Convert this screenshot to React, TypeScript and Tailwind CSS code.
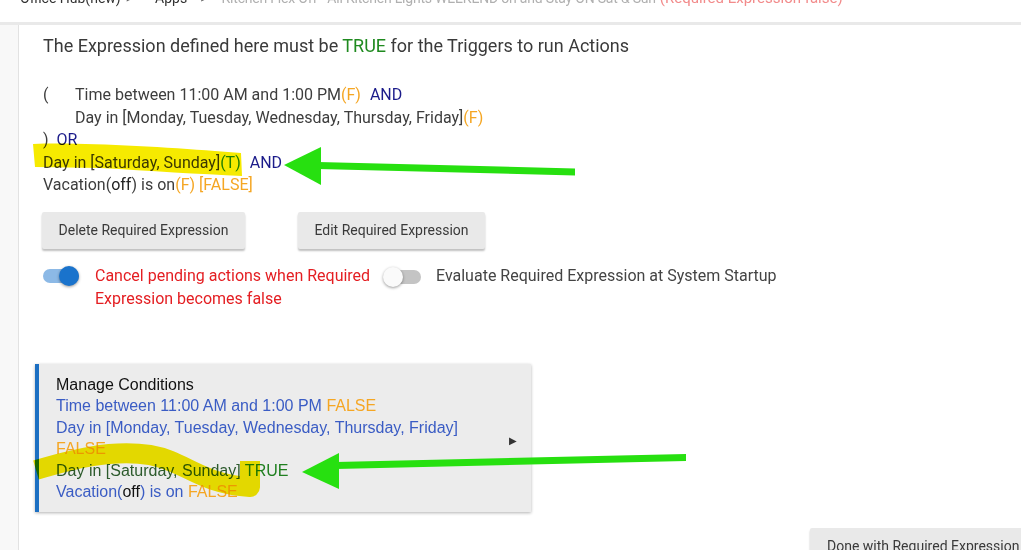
import React from "react";

const roboto = { fontFamily: "Roboto, 'Liberation Sans', sans-serif" } as const;
const arial = { fontFamily: "'Liberation Sans', Arial, sans-serif" } as const;

function Toggle({ on }: { on: boolean }) {
  return (
    <div className="relative h-[20px] w-[38px]">
      <div
        className={
          on
            ? "absolute left-0 top-[3px] h-[14px] w-[36px] rounded-full bg-[#8cb9e6]"
            : "absolute left-[4px] top-[3px] h-[14px] w-[34px] rounded-full bg-[#c4c4c4]"
        }
      />
      <div
        className={
          on
            ? "absolute left-[16px] top-0 h-[20px] w-[20px] rounded-full bg-[#1a73cc] shadow-[0_1px_3px_rgba(0,0,0,0.4)]"
            : "absolute left-0 top-0 h-[20px] w-[20px] rounded-full bg-[#fafafa] shadow-[0_1px_3px_rgba(0,0,0,0.4)]"
        }
      />
    </div>
  );
}

export default function App() {
  return (
    <div className="relative h-[550px] w-[1021px] overflow-hidden bg-white" style={roboto}>
      {/* breadcrumb (cut off at top) */}
      <div className="h-[22px] overflow-hidden">
        <div className="-mt-[12px] flex items-baseline whitespace-nowrap pl-[20px] text-[14px] leading-[20px]">
          <span className="text-[#333]">Office Hub(new)</span>
          <span className="ml-[5px] mr-[22px] text-[#666]">&gt;</span>
          <span className="text-[#333]">Apps</span>
          <span className="ml-[13px] mr-[14px] text-[#666]">&gt;</span>
          <span className="tracking-[-0.2px] text-[#b0b0b0]">
            Kitchen Flex Off - All Kitchen Lights WEEKEND on and Stay ON Sat &amp; Sun
          </span>
          <span className="ml-[4px] text-[15px] text-[#f28b8b]">(Required Expression false)</span>
        </div>
      </div>
      <div className="h-[3px] bg-[#e9e9e9]" />
      <div className="flex h-[525px]">
        <div className="w-[19px] shrink-0 border-r border-[#e2e2e2] bg-[#f8f8f8]" />
        <div className="flex-1 pl-[24px] pt-[9px]">
          <div className="whitespace-nowrap text-[18px] leading-[24px] text-[#3a3a3a]">
            The Expression defined here must be <span className="text-[#1f8a1f]">TRUE</span> for the
            Triggers to run Actions
          </div>

          <div className="mt-[26px] text-[16px] leading-[22.5px] text-[#3d3d3d]">
            <div className="flex">
              <span className="w-[32px]">(</span>
              <span>
                Time between 11:00 AM and 1:00 PM<span className="text-[#f5a623]">(F)</span>
                <span className="ml-[9px] text-[#1b1b8a]">AND</span>
              </span>
            </div>
            <div className="flex">
              <span className="w-[32px]" />
              <span>
                Day in [Monday, Tuesday, Wednesday, Thursday, Friday]
                <span className="text-[#f5a623]">(F)</span>
              </span>
            </div>
            <div>
              ) <span className="ml-[4px] text-[#1b1b8a]">OR</span>
            </div>
            <div>
              Day in [Saturday, Sunday]<span className="text-[#1f8a1f]">(T)</span>
              <span className="ml-[9px] text-[#1b1b8a]">AND</span>
            </div>
            <div>
              Vacation(<span className="text-[#222]">off</span>) is on
              <span className="text-[#f5a623]">(F) [FALSE]</span>
            </div>
          </div>

          <div className="mt-[15.5px] flex gap-[53px]">
            <button className="-ml-[1px] h-[37px] w-[203px] rounded-[2px] bg-[#e9e9e9] text-[14px] text-[#3a3a3a] shadow-[0_2px_2px_rgba(0,0,0,0.25)]">
              Delete Required Expression
            </button>
            <button className="h-[37px] w-[187px] rounded-[2px] bg-[#e9e9e9] text-[14px] text-[#3a3a3a] shadow-[0_2px_2px_rgba(0,0,0,0.25)]">
              Edit Required Expression
            </button>
          </div>

          <div className="mt-[14.5px] flex items-start">
            <div className="w-[52px] pt-[2px]">
              <Toggle on />
            </div>
            <div className="w-[288px] text-[16px] leading-[23px] text-[#e41e22]">
              Cancel pending actions when Required Expression becomes false
            </div>
            <div className="w-[53px] pt-[3px]">
              <Toggle on={false} />
            </div>
            <div className="whitespace-nowrap text-[16px] leading-[23px] text-[#444]">
              Evaluate Required Expression at System Startup
            </div>
          </div>

          <div
            className="-ml-[8px] mt-[54.5px] flex h-[148px] w-[496px] border-l-[4px] border-[#1c6fc2] bg-[#ececec] pl-[17px] pr-[14px] pt-[10px] shadow-[0_1px_3px_rgba(0,0,0,0.3)]"
            style={arial}
          >
            <div className="flex-1 pr-[20px] text-[16px] leading-[21.4px] text-[#3a5cc4]">
              <div className="text-[#111]">Manage Conditions</div>
              <div>
                Time between 11:00 AM and 1:00 PM <span className="text-[#f5a623]">FALSE</span>
              </div>
              <div>
                Day in [Monday, Tuesday, Wednesday, Thursday, Friday]{" "}
                <span className="text-[#f5a623]">FALSE</span>
              </div>
              <div className="text-[#2c5a2c]">
                Day in [Saturday, Sunday] <span className="text-[#1f7f1f]">TRUE</span>
              </div>
              <div>
                Vacation(<span className="text-[#111]">off</span>) is on{" "}
                <span className="text-[#f5a623]">FALSE</span>
              </div>
            </div>
            <div className="flex items-center pb-[6px] text-[10px] text-[#333]">▶</div>
          </div>

          <div className="ml-[767px] mt-[16px]">
            <button className="h-[37px] whitespace-nowrap rounded-[2px] bg-[#e9e9e9] px-[17px] text-[14px] text-[#3a3a3a] shadow-[0_2px_2px_rgba(0,0,0,0.25)]">
              Done with Required Expression
            </button>
          </div>
        </div>
      </div>

      {/* marker annotations */}
      <svg
        className="pointer-events-none absolute left-0 top-0 mix-blend-multiply"
        width="1021"
        height="550"
        viewBox="0 0 1021 550"
      >
        <path
          d="M33 144 C 80 142, 160 147, 215 151 L 241 153 L 242 176 C 200 174, 150 171, 100 168 L 35 167 Z"
          fill="#f6ea00"
        />
        <path
          d="M 36 470 C 70 460, 110 449, 150 455 C 185 461, 200 484, 250 487 L 250 461"
          fill="none"
          stroke="#f6ea00"
          strokeWidth="20"
          strokeLinejoin="round"
        />
      </svg>
      <svg
        className="pointer-events-none absolute left-0 top-0"
        width="1021"
        height="550"
        viewBox="0 0 1021 550"
      >
        <path d="M 318 162 L 575 168.5 L 575 175.5 L 318 169 Z" fill="#27e010" />
        <path d="M 284 165 L 321 147 L 321 185 Z" fill="#27e010" />
        <path d="M 336 462 L 686 454 L 686 461 L 336 469 Z" fill="#27e010" />
        <path d="M 302 472 L 339 453 L 339 489 Z" fill="#27e010" />
      </svg>
    </div>
  );
}
